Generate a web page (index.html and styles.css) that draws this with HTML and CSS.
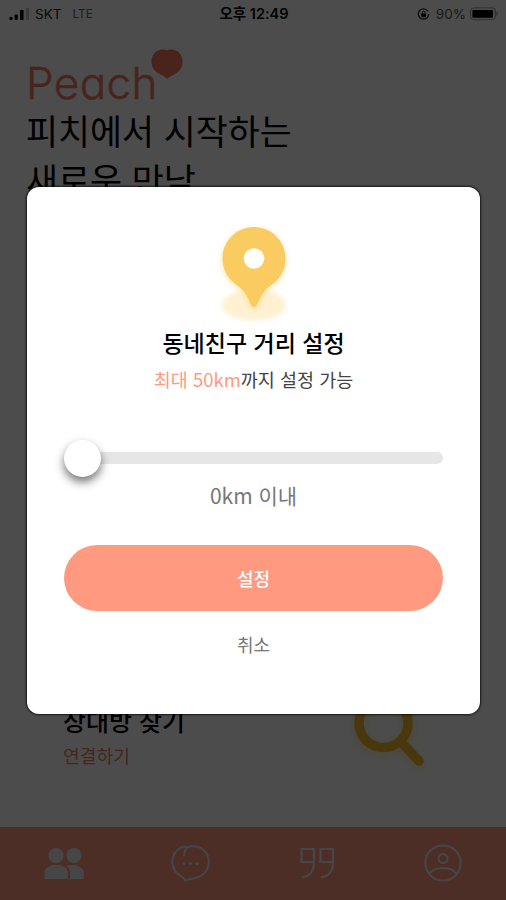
FILE: index.html
```html
<!doctype html>
<html lang="ko">
<head>
    <meta charset="utf-8">
    <title>Peach</title>
    <link rel="stylesheet" href="styles.css">
</head>

<body>
    <div class="screen">
        <div class="status">
            <div class="carrier">
                <svg width="20" height="14" viewBox="0 0 20 14">
                    <g fill="#000">
                        <circle cx="2" cy="11.5" r="1.7"/>
                        <rect x="5.6" y="7.5" width="3.2" height="5.5" rx="1"/>
                        <rect x="11" y="3" width="3.6" height="10" rx="1"/>
                    </g>
                    <rect x="17" y="1" width="3" height="12" rx="1" fill="#c4c4c4"/>
                </svg>
                <span>SKT</span>
                <span class="lte">LTE</span>
            </div>
            <div class="time">오후 12:49</div>
            <div class="battery">
                <svg width="14" height="14" viewBox="0 0 14 14">
                    <circle cx="6.5" cy="7" r="5.2" fill="none" stroke="#333" stroke-width="1.3" stroke-dasharray="29 3.6"/>
                    <rect x="4.3" y="6.6" width="4.6" height="3.6" rx=".6"/>
                    <path d="M5.2 7V5.6a1.4 1.4 0 0 1 2.8 0V7" fill="none" stroke="#000" stroke-width=".8"/>
                </svg>
                <span>90%</span>
                <svg width="29" height="14" viewBox="0 0 29 14">
                    <rect x=".6" y=".9" width="24.8" height="11.8" rx="3" fill="none" stroke="#999" stroke-width="1"/>
                    <rect x="2.4" y="3" width="20.6" height="7.8" rx="1"/>
                    <path d="M26.6 4q2.4 2.8 0 5.6z" fill="#999"/>
                </svg>
            </div>
        </div>

        <div class="main">
            <div class="brand">
                <span class="logo">Peach</span>
                <svg class="heart" width="32" height="31" viewBox="0 0 32 31">
                    <path d="M16 1.2C19 0 26 0 29.5 5.5C32.8 11 32 17.5 28.5 21.5C25 25.5 20 26.5 16 30C13 26 7.500 25.500 3.800 21.500C0 17.500-.6 10 2.500 5.500C6 0 13 0 16 1.200Z" fill="#f07a63"/>
                </svg>
            </div>
            <h1>피치에서 시작하는<br>새로운 만남</h1>
            <div class="card">
                <div>
                    <h2>상대방 찾기</h2>
                    <p>연결하기</p>
                </div>
                <svg class="search" width="72" height="88" viewBox="0 0 72 88">
                    <g fill="none" stroke="#f5bd30">
                        <circle cx="27.5" cy="41" r="24.5" stroke-width="9.5"/>
                        <path d="M46 61L63 79" stroke-width="9.5" stroke-linecap="round"/>
                    </g>
                </svg>
            </div>
        </div>

        <div class="nav">
            <svg viewBox="0 0 40 40" fill="#ececec">
                <circle cx="12" cy="12.5" r="7.6"/>
                <circle cx="30" cy="12.5" r="7.6"/>
                <path d="M.5 36V30C.5 25 6 21.7 12 21.7S24 25 24 30V36Z"/>
                <path d="M22.5 22.8C31 20 39.8 24 39.8 29.5V36H26V29.5C26 26.5 24.5 24.3 22.5 22.8Z"/>
            </svg>
            <svg viewBox="-1 0 40 40" fill="none" stroke="#ececec" stroke-width="2">
                <path d="M13.2 13C13 10 14 7 16 4.5C13 2.2 9.5 4.5 7 6.5C-1 13.5 0 25 7 31C9.5 33.2 13 34.5 14.5 37.5C17 36 20 36 23 35.5C31 34 37.5 28 37.8 19.5C38 10 31 3.2 22 3.2C19.5 3.2 18 3.5 16 4.5"/>
                <g fill="#ececec" stroke="none">
                    <circle cx="13" cy="20.5" r="1.6"/><circle cx="19.5" cy="20.5" r="1.6"/><circle cx="26" cy="20.5" r="1.6"/>
                </g>
            </svg>
            <svg viewBox="0 0 40 40" fill="none" stroke="#ececec" stroke-width="2.2">
                <path d="M17 19H4.5V6H17V19C17 29 13 33 5 34.5M36 19H23.5V6H36V19C36 29 32 33 24 34.5"/>
            </svg>
            <svg viewBox="0 0 40 40" fill="none" stroke="#ececec" stroke-width="2">
                <circle cx="20" cy="20" r="17.6"/>
                <circle cx="20" cy="15.5" r="4.5"/>
                <path d="M6.5 30.5C12 23 28 23 33.5 30.5"/>
            </svg>
        </div>

        <div class="overlay">
            <div class="modal">
                <svg width="80" height="104" viewBox="0 0 80 104">
                    <ellipse class="glow" cx="40" cy="83" rx="32" ry="15.5" fill="#fff1d2"/>
                    <path class="drop" d="M40 5C57.5 5 71.5 19 71.5 36.5C71.5 49 65 58 56 64C48.5 69.5 46 76 43 83Q40 87 37 83C34 76 31.5 69.5 24 64C15 58 8.5 49 8.5 36.5C8.5 19 22.5 5 40 5Z" fill="#facb60"/>
                    <circle cx="40" cy="36.5" r="10.3" fill="#fff"/>
                </svg>
                <h2>동네친구 거리 설정</h2>
                <p class="desc"><span>최대 50km</span>까지 설정 가능</p>
                <div class="slider">
                    <div class="track"></div>
                    <div class="knob"></div>
                </div>
                <p class="value">0km 이내</p>
                <button class="ok">설정</button>
                <button class="cancel">취소</button>
            </div>
        </div>
    </div>
</body>
</html>
```
FILE: styles.css
```css
* {
  box-sizing: border-box;
  margin: 0;
  padding: 0;
}

body, button {
  font-family: "Noto Sans CJK KR", sans-serif;
}

.screen {
  position: relative;
  width: 506px;
  height: 900px;
  background: #fff;
  display: flex;
  flex-direction: column;
  overflow: hidden;
}

/* status bar */
.status {
  display: grid;
  grid-template-columns: 1fr auto 1fr;
  align-items: center;
  height: 27px;
  padding: 0 7px 0 9px;
  font: 13.5px/26px Inter, "Noto Sans CJK KR", sans-serif;
  color: #222;
}
.carrier, .battery {
  display: flex;
  align-items: center;
}
.carrier span {margin-left: 6px;}
.carrier .lte {margin-left: 11px; font-size: 12px; color: #666;}
.time {font-size: 14.5px; font-weight: 600; color: #000;}
.battery {justify-content: flex-end;}
.battery span {margin: 0 4px 0 5px; color: #555;}

.main {
  flex: 1;
  padding: 21px 26px 0;
}
.brand {
  display: flex;
  align-items: flex-start;
  height: 58px;
}
.logo {
  font: 300 44px/70px Inter, sans-serif;
  font-feature-settings: "cv11";
  letter-spacing: .4px;
  -webkit-text-stroke: .5px #f07a63;
  color: #f07a63;
}
.heart {margin: 1px 0 0 -7px;}
h1 {
  font-size: 34.8px;
  font-weight: 400;
  line-height: 49px;
  color: #000;
}
.card {
  display: flex;
  justify-content: space-between;
  margin-top: 478px;
  padding: 0 52px 0 37px;
}
.card h2 {
  font-size: 25px;
  font-weight: 500;
  line-height: 36px;
  margin-top: 20px;
}
.card p {
  margin-top: 2px;
  font-size: 18.2px;
  line-height: 30px;
  color: #f07a63;
}
.search {
  overflow: visible;
  filter: drop-shadow(0 3px 5px rgba(240,180,0,.3));
}

.nav {
  display: flex;
  justify-content: space-around;
  height: 73px;
  padding: 16px 0 0 1px;
  background: #ff9a80;
}
.nav svg {width: 40px; height: 40px;}

.overlay {
  position: absolute;
  inset: 0;
  padding: 187px 26px 0 27px;
  background: rgba(0,0,0,.7);
}

/* distance popup */
.modal {
  display: flex;
  flex-direction: column;
  align-items: center;
  height: 527px;
  padding: 35px 37px 0;
  border-radius: 12px;
  background: #fff;
  box-shadow: 0 0 2px 1px rgba(0,0,0,.7);
}
.glow {filter: blur(2px);}
.drop {filter: drop-shadow(0 2px 3px rgba(250,203,96,.5));}
.modal h2 {
  margin-top: -1px;
  font-size: 23px;
  font-weight: 500;
  line-height: 34px;
}
.desc {
  margin-top: 6px;
  font-size: 18.5px;
  line-height: 28px;
  color: #444;
}
.desc span {color: #ff9a80;}
.slider {
  display: flex;
  align-items: center;
  width: 100%;
  height: 38px;
  margin-top: 46px;
}
.track {
  flex: 1;
  order: 2;
  height: 12px;
  margin-left: -20px;
  border-radius: 6px;
  background: #e6e6e6;
}
.knob {
  position: relative;
  order: 1;
  z-index: 1;
  width: 37px;
  height: 37px;
  border-radius: 50%;
  background: #fff;
  box-shadow: 0 5px 10px rgba(0,0,0,.55);
}
.value {
  margin-top: 2px;
  font-size: 21px;
  line-height: 32px;
  color: #777;
}
button {
  border: 0;
  background: none;
  font-size: 18px;
}
.ok {
  width: 100%;
  height: 66px;
  margin-top: 34px;
  border-radius: 33px;
  background: #ff9a80;
  color: #fff;
  font-weight: 500;
}
.cancel {
  margin-top: 20px;
  line-height: 26px;
  color: #777;
}
```
